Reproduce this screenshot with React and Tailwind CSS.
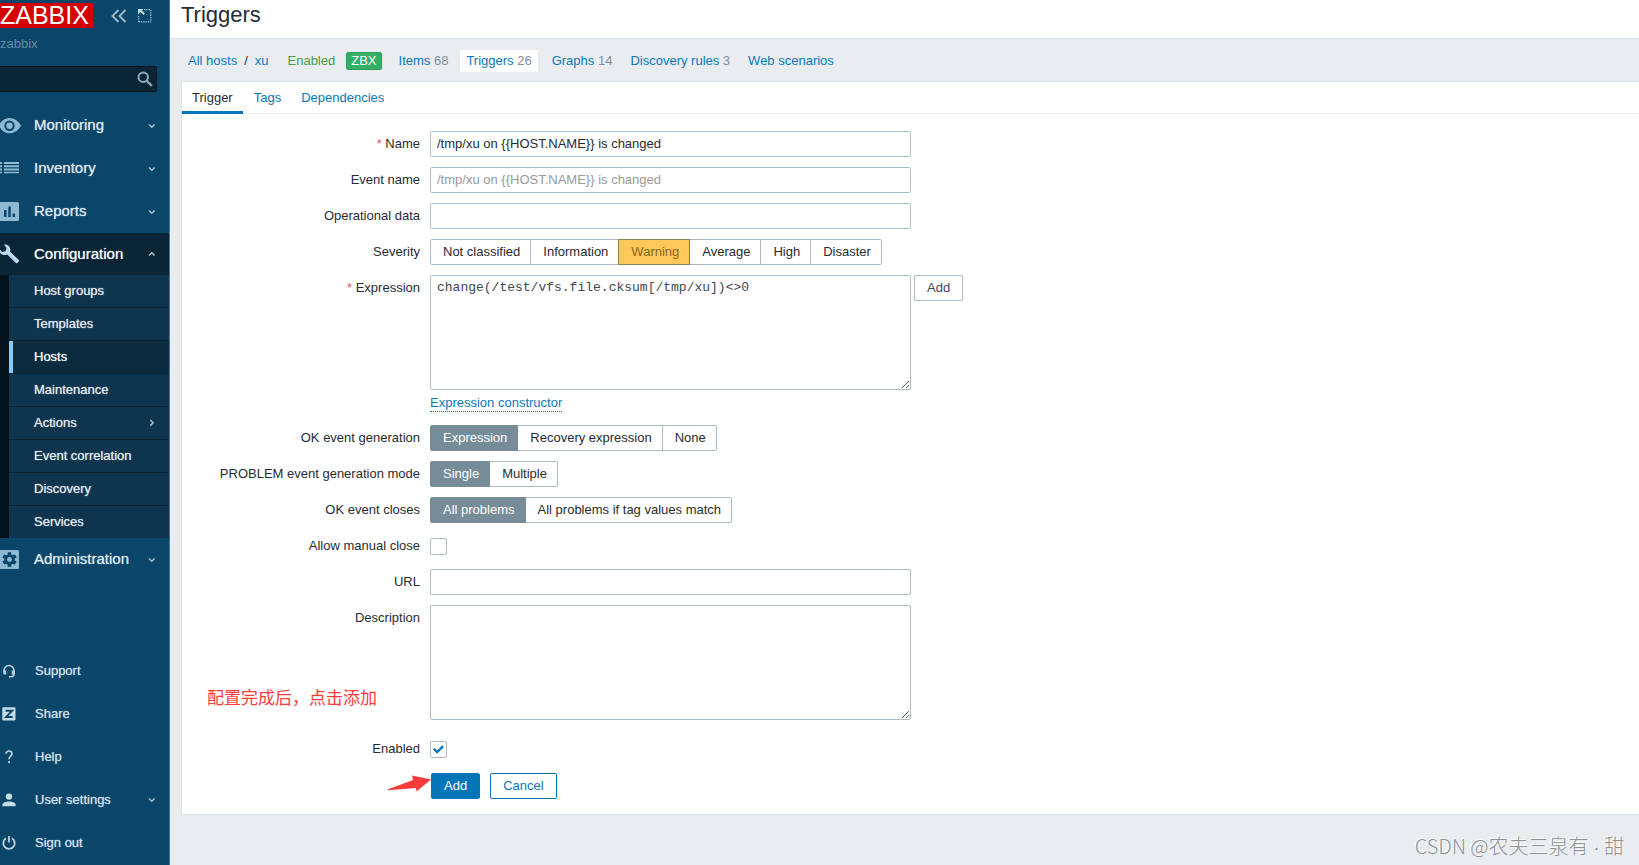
import React from "react";

const mainItems = [
  { label: "Monitoring", icon: "eye" },
  { label: "Inventory", icon: "list" },
  { label: "Reports", icon: "chart" },
];

const configItems = [
  "Host groups",
  "Templates",
  "Hosts",
  "Maintenance",
  "Actions",
  "Event correlation",
  "Discovery",
  "Services",
];

const footerItems = [
  { label: "Support", icon: "support" },
  { label: "Share", icon: "share" },
  { label: "Help", icon: "help" },
  { label: "User settings", icon: "user", arrow: true },
  { label: "Sign out", icon: "power" },
];

function Icon({ name }) {
  switch (name) {
    case "eye":
      return (
        <svg className="h-5 w-[21px]" viewBox="0 0 21 20" aria-hidden="true">
          <path
            fill="#8fb8d2"
            fillRule="evenodd"
            d="M9.500 2C4.800 2 1 5-1 9.500c2 4.800 5.800 7.800 10.500 7.800s9-3 11.500-7.800C18.500 5 14.200 2 9.500 2zm0 2.500a5.200 5.200 0 1 1 0 10.400a5.200 5.200 0 0 1 0-10.400zm0 2a3.200 3.200 0 1 0 0 6.400a3.200 3.200 0 0 0 0-6.400z"
          />
        </svg>
      );
    case "list":
      return (
        <svg className="h-5 w-[21px]" viewBox="0 0 21 20" aria-hidden="true">
          <path
            fill="#8fb8d2"
            d="M0 3h2v2H0zM4 3h15v2H4zM0 6.300h2v2H0zM4 6.300h15v2H4zM0 9.600h2v2H0zM4 9.600h15v2H4zM0 12.800h2v1.500H0zM4 12.800h15v1.500H4z"
          />
        </svg>
      );
    case "chart":
      return (
        <svg className="h-5 w-[21px]" viewBox="0 0 21 20" aria-hidden="true">
          <rect x="-1" y="0" width="20" height="19" rx="1.500" fill="#8fb8d2" />
          <path fill="#0a466a" d="M4 8h2.500v7H4zM8.300 4.500h2.500V15H8.300zM12.500 11.500H15V15h-2.500z" />
        </svg>
      );
    case "wrench":
      return (
        <svg className="h-5 w-[21px]" viewBox="0 0 21 20" aria-hidden="true">
          <path
            fill="#b8d9ef"
            d="M4 .7c3.300-.6 6.300 1.700 6.300 5 0 .7-.1 1.300-.3 1.900l8.800 8.300c.5.500.5 1 0 1.500l-1.500 1.600c-.5.500-1 .5-1.500 0L7.300 10.600C4.800 11.700 1.500 11 0 8.800c-.8-1-1.200-2-1-4L2.200 8 5.500 7.200 6.600 4z"
          />
        </svg>
      );
    case "gear":
      return (
        <svg className="h-5 w-[21px]" viewBox="0 0 21 20" aria-hidden="true">
          <rect x="-1" y="0" width="20" height="19" rx="1.500" fill="#8fb8d2" />
          <g transform="translate(9.500 9.500)" fill="#0a466a">
            <circle r="5.200" />
            <rect x="-1.800" y="-7.200" width="3.600" height="14.400" rx=".5" />
            <rect x="-1.800" y="-7.200" width="3.600" height="14.400" rx=".5" transform="rotate(60)" />
            <rect x="-1.800" y="-7.200" width="3.600" height="14.400" rx=".5" transform="rotate(120)" />
            <circle r="2.400" fill="#8fb8d2" />
          </g>
        </svg>
      );
    case "support":
      return (
        <svg className="h-[14px] w-[14px]" viewBox="0 0 14 14" aria-hidden="true">
          <path d="M2 8V6.500a5 5 0 0 1 10 0V10q0 2.600-3 2.800H7" fill="none" stroke="#bdd3e0" strokeWidth="1.500" />
          <path d="M1.300 6.500h2.900v4H2.700q-1.400 0-1.400-1.500zM12.700 6.500H9.800v4h2.900z" fill="#bdd3e0" />
        </svg>
      );
    case "share":
      return (
        <svg className="h-[14px] w-[14px]" viewBox="0 0 14 14" aria-hidden="true">
          <rect x=".3" y=".3" width="13.200" height="13.200" rx="1.200" fill="#c4dbe8" />
          <path d="M3.500 3.800h6.600L4 10h6.700" fill="none" stroke="#0a466a" strokeWidth="1.900" />
        </svg>
      );
    case "help":
      return (
        <svg className="h-[14px] w-[14px]" viewBox="0 0 14 14" aria-hidden="true">
          <path d="M4 3.800Q4.200 1 7 1t3 2.700C10 6 7 6.300 7 9.300" fill="none" stroke="#bdd3e0" strokeWidth="1.700" />
          <rect x="6.100" y="11.200" width="1.900" height="1.900" fill="#bdd3e0" />
        </svg>
      );
    case "user":
      return (
        <svg className="h-[14px] w-[14px]" viewBox="0 0 14 14" aria-hidden="true">
          <circle cx="7" cy="3.600" r="3.200" fill="#c4dbe8" />
          <path d="M.4 13.200v-1.600C.4 9.600 4 8.500 7 8.500s6.600 1.100 6.600 3.100v1.600z" fill="#c4dbe8" />
        </svg>
      );
    default:
      return (
        <svg className="h-[14px] w-[14px]" viewBox="0 0 14 14" aria-hidden="true">
          <path d="M4 2.300a5.700 5.700 0 1 0 6 0M7 0v6.500" fill="none" stroke="#bdd3e0" strokeWidth="1.800" />
        </svg>
      );
  }
}

const arrows = {
  down: "M1 2.500l2.800 2.800 2.800-2.800",
  up: "M1 5.500l2.800-2.800 2.800 2.800",
  right: "M2.300 1l2.800 2.800-2.800 2.800",
};

function Arrow({ dir }) {
  return (
    <svg className="ml-auto h-2 w-2 shrink-0" viewBox="0 0 8 8" aria-hidden="true">
      <path d={arrows[dir]} fill="none" stroke="#a9c2d1" strokeWidth="1.500" />
    </svg>
  );
}

function MainItem({ label, icon, dir = "down", active }) {
  return (
    <a
      href="#"
      className={
        "flex items-center pr-[13px] text-[15px] " +
        (active ? "h-[42px] bg-[#0a2636] text-white" : "h-[43px] text-[#dfe9ef]")
      }
    >
      <span className="w-[34px] shrink-0">
        <Icon name={icon} />
      </span>
      {label}
      <Arrow dir={dir} />
    </a>
  );
}

function Sidebar() {
  return (
    <aside className="flex w-[170px] shrink-0 flex-col overflow-hidden border-r border-[#54788f] bg-[#0a466a] [text-shadow:0_0_1px_#ffffffb0]">
      <div className="flex items-start pt-[3px]">
        <a href="#" className="h-[25px] w-[93px] bg-[#d40000] text-[25px] leading-[25px] text-white [text-shadow:none]">
          ZABBIX
        </a>
        <button type="button" aria-label="Collapse sidebar" className="mt-[6px] ml-[18px]">
          <svg className="h-[14px] w-4" viewBox="0 0 16 14">
            <path d="M7.500 1L1.500 7l6 6M14.500 1l-6 6 6 6" fill="none" stroke="#9fbccd" strokeWidth="1.800" />
          </svg>
        </button>
        <button type="button" aria-label="Hide sidebar" className="mt-[6px] ml-[11px]">
          <svg className="h-[14px] w-[14px]" viewBox="0 0 14 14">
            <path
              d="M6 .7h7M12.800 1v12M.7 12.800H13M.7 7v6"
              fill="none"
              stroke="#a9c5d5"
              strokeWidth="1.200"
              strokeDasharray="1.300 1"
            />
            <path d="M0 0h5.500L3.900 1.600l3 3-1.400 1.400-3-3L0 5.500z" fill="#c4dbe8" />
          </svg>
        </button>
      </div>
      <div className="mt-[6px] h-5 text-[13px] leading-5 text-[#648da5] [text-shadow:none]">zabbix</div>
      <div className="relative mt-3 mr-3 h-[26px]">
        <input
          aria-label="Search"
          className="h-full w-full rounded-r-[2px] border border-l-0 border-[#04141d] bg-[#0a2636] pr-7 text-[13px] text-white outline-none"
        />
        <svg className="absolute top-[5px] right-[4px] h-4 w-4" viewBox="0 0 16 16" aria-hidden="true">
          <circle cx="6.200" cy="6.200" r="4.700" fill="none" stroke="#8fa9b8" strokeWidth="2" />
          <path d="M9.800 9.800l5 5" stroke="#8fa9b8" strokeWidth="2.400" />
        </svg>
      </div>
      <nav className="mt-3" aria-label="Main">
        {mainItems.map((item) => (
          <MainItem key={item.label} {...item} />
        ))}
        <MainItem label="Configuration" icon="wrench" dir="up" active />
        <ul className="border-l-[9px] border-[#03131c] bg-[#0f344d] text-[13px] text-[#e3ecf1]">
          {configItems.map((label, i) => (
            <li key={label} className={i > 0 ? "border-t border-[#0a2636]" : ""}>
              <a
                href="#"
                className={
                  "flex h-8 items-center border-l-4 pr-[13px] pl-[21px] " +
                  (label === "Hosts" ? "border-[#84cbfa] bg-[#0b2b3e] text-white" : "border-transparent")
                }
              >
                {label}
                {label === "Actions" && <Arrow dir="right" />}
              </a>
            </li>
          ))}
        </ul>
        <MainItem label="Administration" icon="gear" />
      </nav>
      <nav className="mt-auto pb-px text-[13px] text-[#cfdfe8]" aria-label="User">
        {footerItems.map(({ label, icon, arrow }) => (
          <a key={label} href="#" className="flex h-[43px] items-center pr-[13px]">
            <span className="w-[35px] shrink-0 pl-[2px]">
              <Icon name={icon} />
            </span>
            {label}
            {arrow && <Arrow dir="down" />}
          </a>
        ))}
      </nav>
    </aside>
  );
}

function Count({ children }) {
  return <span className="text-[#7f8f98]">{children}</span>;
}

function HostNav() {
  return (
    <nav className="flex h-[42px] items-center pt-px pl-[7px] text-[#0b78b9]" aria-label="Host">
      <a href="#">All hosts</a>
      <span className="px-[7px] text-[#1f2c33]">/</span>
      <a href="#">xu</a>
      <span className="ml-[19px] text-[#429e47]">Enabled</span>
      <span className="ml-[11px] h-[18px] rounded-[2px] border border-[#2f9f5e] bg-[#34af67] px-1 leading-4 text-white">ZBX</span>
      <a href="#" className="ml-[11px] px-[6px]">
        Items <Count>68</Count>
      </a>
      <a href="#" className="ml-[6px] bg-white px-[6px] leading-[22px]">
        Triggers <Count>26</Count>
      </a>
      <a href="#" className="ml-2 px-[6px]">
        Graphs <Count>14</Count>
      </a>
      <a href="#" className="ml-[6px] px-[6px]">
        Discovery rules <Count>3</Count>
      </a>
      <a href="#" className="ml-[6px] px-[6px]">
        Web scenarios
      </a>
    </nav>
  );
}

function Row({ label, htmlFor, required, children }) {
  const content = (
    <>
      {required && <span className="text-[#e45959]">* </span>}
      {label}
    </>
  );
  return (
    <div className="flex items-start">
      <div className="w-[238px] shrink-0 text-right leading-[26px]">
        {htmlFor ? <label htmlFor={htmlFor}>{content}</label> : content}
      </div>
      <div className="ml-[10px] flex min-w-0 flex-1 items-start">{children}</div>
    </div>
  );
}

const box = "w-[481px] rounded-[2px] border border-[#acbbc2] bg-white px-[6px] outline-none placeholder:text-[#9a9a9a]";
const field = box + " h-[26px] pb-[2px]";

function Segmented({ name, label, options, value, warning }) {
  const on = warning
    ? "has-checked:border-[#8a8155] has-checked:bg-[#ffc859] has-checked:text-[#85671f]"
    : "has-checked:border-[#768d99] has-checked:bg-[#768d99] has-checked:text-white";
  return (
    <div role="radiogroup" aria-label={label} className="flex">
      {options.map((option) => (
        <label
          key={option}
          className={
            "relative -ml-px h-[26px] cursor-pointer border border-[#acbbc2] pr-[10px] pl-3 leading-6 first:ml-0 first:rounded-l-[2px] last:rounded-r-[2px] has-checked:z-10 " +
            on
          }
        >
          <input type="radio" name={name} defaultChecked={option === value} className="sr-only" />
          {option}
        </label>
      ))}
    </div>
  );
}

function Checkbox({ id, checked }) {
  return (
    <span className="relative flex h-[26px] items-center">
      <input
        id={id}
        type="checkbox"
        defaultChecked={checked}
        className="peer h-[17px] w-[17px] appearance-none rounded-[2px] border border-[#acbbc2] bg-white"
      />
      <svg
        className="pointer-events-none absolute left-[3px] hidden h-[11px] w-[11px] peer-checked:block"
        viewBox="0 0 11 11"
        aria-hidden="true"
      >
        <path d="M.8 4.800l3.400 3.300 6-6" fill="none" stroke="#0b78b9" strokeWidth="2.500" />
      </svg>
    </span>
  );
}

function TriggerForm() {
  return (
    <form className="relative flex flex-col gap-[10px] pt-[17px] pb-[15px]" onSubmit={(e) => e.preventDefault()}>
      <Row label="Name" htmlFor="name" required>
        <input id="name" className={field} defaultValue="/tmp/xu on {{HOST.NAME}} is changed" />
      </Row>
      <Row label="Event name" htmlFor="event-name">
        <input id="event-name" className={field} placeholder="/tmp/xu on {{HOST.NAME}} is changed" />
      </Row>
      <Row label="Operational data" htmlFor="opdata">
        <input id="opdata" className={field} />
      </Row>
      <Row label="Severity">
        <Segmented
          name="severity"
          label="Severity"
          options={["Not classified", "Information", "Warning", "Average", "High", "Disaster"]}
          value="Warning"
          warning
        />
      </Row>
      <Row label="Expression" htmlFor="expression" required>
        <div>
          <textarea
            id="expression"
            spellCheck={false}
            className={box + " block h-[115px] resize pt-1 font-['Liberation_Mono',monospace] leading-4 text-[#3c4a52]"}
            defaultValue="change(/test/vfs.file.cksum[/tmp/xu])<>0"
          />
          <div className="flex h-[25px] items-start pt-[5px]">
            <button type="button" className="border-b border-dotted border-[#0b78b9] leading-4 text-[#0b78b9]">
              Expression constructor
            </button>
          </div>
        </div>
        <button type="button" className="ml-[3px] h-[26px] rounded-[2px] border border-[#acbbc2] px-3 text-[#3c4a52]">
          Add
        </button>
      </Row>
      <Row label="OK event generation">
        <Segmented
          name="recovery"
          label="OK event generation"
          options={["Expression", "Recovery expression", "None"]}
          value="Expression"
        />
      </Row>
      <Row label="PROBLEM event generation mode">
        <Segmented
          name="mode"
          label="PROBLEM event generation mode"
          options={["Single", "Multiple"]}
          value="Single"
        />
      </Row>
      <Row label="OK event closes">
        <Segmented
          name="closes"
          label="OK event closes"
          options={["All problems", "All problems if tag values match"]}
          value="All problems"
        />
      </Row>
      <Row label="Allow manual close" htmlFor="manual-close">
        <Checkbox id="manual-close" />
      </Row>
      <Row label="URL" htmlFor="url">
        <input id="url" className={field} />
      </Row>
      <Row label="Description" htmlFor="description">
        <textarea id="description" className={box + " h-[115px] resize pt-1 leading-4"} />
      </Row>
      <div className="pt-[6px]">
        <Row label="Enabled" htmlFor="enabled">
          <Checkbox id="enabled" checked />
        </Row>
      </div>
      <div className="flex gap-[10px] pt-px pl-[249px]">
        <button type="submit" className="h-[26px] rounded-[2px] border border-[#0275b8] bg-[#0275b8] px-3 text-white">
          Add
        </button>
        <button type="button" className="h-[26px] rounded-[2px] border border-[#0275b8] bg-white px-3 text-[#0b78b9]">
          Cancel
        </button>
      </div>
      <p className="absolute bottom-[105px] left-[25px] font-['Noto_Sans_CJK_SC',sans-serif] text-[17px] leading-6 text-[#fb3b3b]">
        配置完成后，点击添加
      </p>
      <svg className="absolute bottom-[22px] left-[205px] h-[18px] w-[45px]" viewBox="0 0 45 18" aria-hidden="true">
        <path d="M.5 15.500L26 6 25 1.500 44 5.500 29.500 17.500 29 14 1 16.300z" fill="#fb3b3b" />
      </svg>
    </form>
  );
}

export default function App() {
  return (
    <div className="flex min-h-screen bg-[#e9edf0] font-['Liberation_Sans',Arial,sans-serif] text-[13px] text-[#1f2c33]">
      <Sidebar />
      <main className="relative min-w-0 flex-1">
        <header className="h-[39px] border-b border-[#dfe4e7] bg-white pl-[11px]">
          <h1 className="text-[22px] leading-[30px]">Triggers</h1>
        </header>
        <div className="pl-[11px]">
          <HostNav />
          <section className="border border-r-0 border-[#dfe4e7] bg-white">
            <div role="tablist" className="flex h-8 border-b border-[#ebeef0] text-[#0b78b9]">
              <button type="button" role="tab" aria-selected="true" className="h-8 border-b-[3px] border-[#0275b8] px-[10px] pt-[2px] text-[#1f2c33]">
                Trigger
              </button>
              <button type="button" role="tab" aria-selected="false" className="ml-px h-8 px-[10px] pb-px">
                Tags
              </button>
              <button type="button" role="tab" aria-selected="false" className="h-8 px-[10px] pb-px">
                Dependencies
              </button>
            </div>
            <TriggerForm />
          </section>
        </div>
        <p className="absolute right-[15px] bottom-[4px] font-['Noto_Sans_CJK_SC',sans-serif] text-[20px] leading-7 font-light text-[#8f9294] [text-shadow:-1px_-1px_0_#ffffff]">
          CSDN @农夫三泉有 <span className="font-['Liberation_Sans',sans-serif]">·</span> 甜
        </p>
      </main>
    </div>
  );
}
